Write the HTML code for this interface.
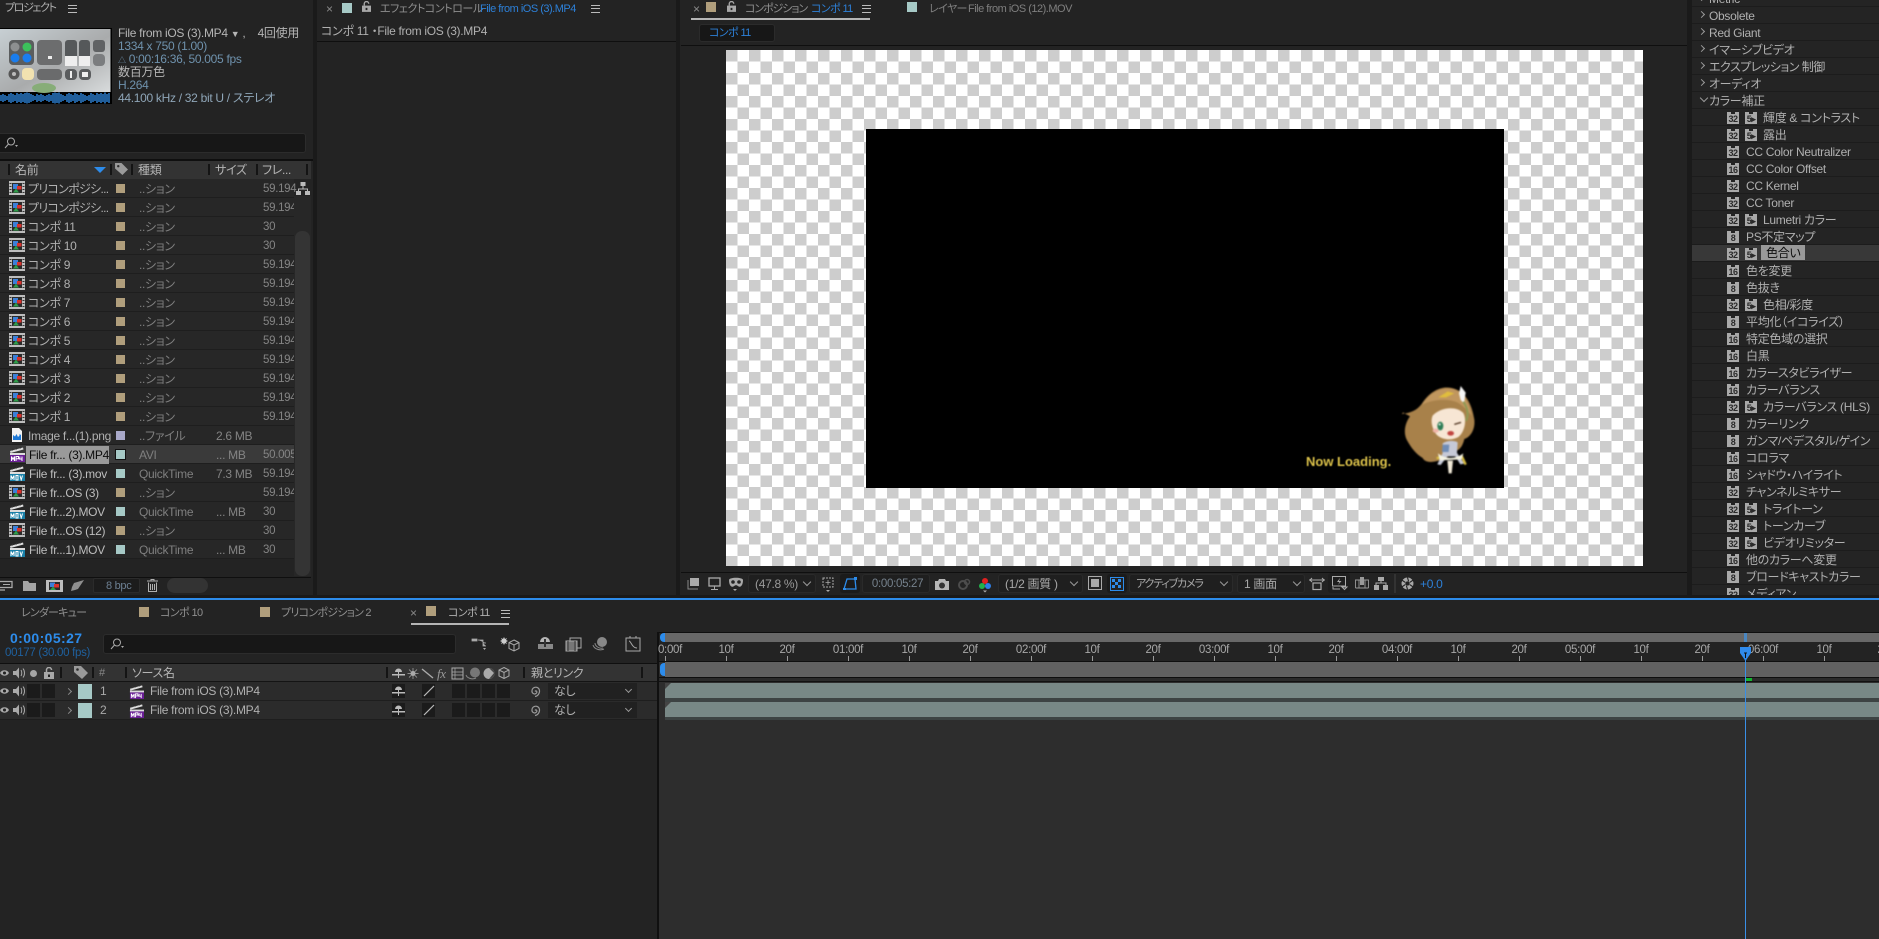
<!DOCTYPE html>
<html lang="ja"><head><meta charset="utf-8"><title>After Effects</title>
<style>
*{box-sizing:border-box}
html,body{margin:0;padding:0;width:1879px;height:939px;overflow:hidden;background:#1a1a1a;font-family:"Liberation Sans","Noto Sans CJK JP","IPAGothic",sans-serif;font-size:12px;letter-spacing:-.3px;font-feature-settings:"palt";color:#b0b0b0}
.a{position:absolute;white-space:nowrap}
.p{position:absolute;background:#232323;overflow:hidden}
.sw{position:absolute;display:block}
.sep{position:absolute;width:2px;background:#141414}
.menu{position:absolute;width:9px;height:8px;border-top:1px solid #bbb;border-bottom:1px solid #bbb}
.menu:after{content:"";position:absolute;left:0;right:0;top:2px;height:1px;background:#bbb}
.blue{color:#2d8ceb}
.x{color:#8a8a8a;font-size:12px}
.tab{font-size:11px;letter-spacing:-.6px}
svg{display:block;position:absolute;overflow:visible}
#rows{position:absolute;left:0;top:179px;width:294px}
.r{position:relative;height:19px;background:#272727;border-bottom:1px solid #1e1e1e;line-height:20px;white-space:nowrap}
.r svg{left:9px;top:2px;width:16px;height:14px}
.r .n{position:absolute;left:28px;top:0;color:#b0b0b0;height:18px;line-height:20px}
.r .s{position:absolute;left:116px;top:5px;width:9px;height:9px}
.r .t{position:absolute;left:139px;color:#7f7f7f}
.r .z{position:absolute;left:216px;color:#848484}
.r .f{position:absolute;left:263px;color:#848484;font-size:11.5px}
.tan{background:#b09e7c}.teal{background:#a6c9c6}.lav{background:#a9a9c9}
#fx{position:absolute;left:1692px;top:0;width:187px;height:595px;background:#242424;overflow:hidden}
.e{position:relative;height:17px;line-height:18px;border-bottom:1px solid #1c1c1c;white-space:nowrap;color:#b0b0b0}
.e .c{position:absolute;left:17px}
.e .ar{position:absolute;left:7px;top:5px;width:5px;height:5px;border-top:1px solid #999;border-right:1px solid #999;transform:rotate(45deg)}
.e .dn{position:absolute;left:9px;top:3px;width:6px;height:6px;border-bottom:1px solid #999;border-right:1px solid #999;transform:rotate(45deg)}
.e .l1{position:absolute;left:54px}
.e .l2{position:absolute;left:71px}
.b{position:absolute;left:35px;top:3px;width:12px;height:12px;background:#a9a9a9;color:#2a2a2a;font:bold 9px/14px "Liberation Sans",sans-serif;text-align:center;letter-spacing:-.5px}
.b:before{content:"";position:absolute;left:4px;top:0;width:4px;height:2px;background:#242424}
.b.q{left:53px}
.ck{position:absolute;left:726px;top:50px;width:917px;height:516px;background-color:#fff;background-image:conic-gradient(#cdcdcd 25%,#fff 0 50%,#cdcdcd 0 75%,#fff 0);background-size:23px 23px;background-position:11.5px 0}
.tk{position:absolute;top:656px;width:1px;height:5px;background:#9a9a9a}
.lb{position:absolute;top:644px;line-height:13px;color:#a8a8a8;font-size:11.5px;transform:translateX(-50%);white-space:nowrap}
.sb{position:absolute;background:#1b1b1b;width:13px;height:14px}
.tb{position:absolute;top:574px;height:19px;border:1px solid #2a2a2a;background:#1f1f1f;border-radius:3px;color:#9a9a9a;line-height:19px;padding-left:6px;white-space:nowrap}
.ch{position:absolute;width:6px;height:6px;border-right:1px solid #999;border-bottom:1px solid #999;transform:rotate(45deg)}
</style></head><body>
<svg width="0" height="0" style="position:absolute">
<defs>
<symbol id="comp" viewBox="0 0 16 14"><rect x="0" y="0" width="16" height="14" fill="#bdbdbd"/><path d="M.5 2.500h2M.5 5.500h2M.5 8.500h2M.5 11.500h2M13.500 2.500h2M13.500 5.500h2M13.500 8.500h2M13.500 11.500h2" stroke="#333"/><rect x="3" y="2" width="10" height="10" fill="#2b2b2b"/><rect x="4" y="3" width="5" height="5" fill="#3c7fd8"/><rect x="8" y="5" width="4.500" height="3.500" fill="#d8322c"/><path d="M4 11.500l3-4 3 4z" fill="#2f9e4a"/></symbol>
<symbol id="mp4" viewBox="0 0 16 16"><path d="M1 5l13-3.500.5 2L1.500 7z" fill="#ddd"/><path d="M3 4.500l1-2M7 3.500l1-2M11 2.500l1-2" stroke="#333"/><rect x="1" y="7" width="15" height="2" fill="#ddd"/><rect x="1" y="9" width="15" height="7" fill="#6a1f96"/><path d="M2.500 15v-4.500l1.500 3 1.500-3V15M7 15v-4.500h2.500v2.200H7M11 10.500l-.5 2.500h3M13 10.500V15" fill="none" stroke="#fff" stroke-width="1"/></symbol>
<symbol id="mov" viewBox="0 0 16 16"><path d="M1 5l13-3.500.5 2L1.500 7z" fill="#ddd"/><path d="M3 4.500l1-2M7 3.500l1-2M11 2.500l1-2" stroke="#333"/><rect x="1" y="7" width="15" height="2" fill="#ddd"/><rect x="1" y="9" width="15" height="7" fill="#1a80a8"/><path d="M2 15v-4.500l1.500 3 1.500-3V15M7 10.500h2v4.500H7zM11 10.500l1.200 4.500 1.300-4.500" fill="none" stroke="#fff" stroke-width="1"/></symbol>
<symbol id="png" viewBox="0 0 16 14"><path d="M3 0h7l3 3v11H3z" fill="#f2f2f2"/><path d="M4 12V7l2 1.500 1.500-2.500 1.500 3 1.500-1.500V6l1.500 1v5z" fill="#1d78d6"/></symbol>
<symbol id="eye" viewBox="0 0 10 8"><path d="M0 4c2-4 8-4 10 0-2 4-8 4-10 0z" fill="#aaa"/><circle cx="5" cy="4" r="1.700" fill="#222"/></symbol>
<symbol id="spk" viewBox="0 0 12 12"><path d="M0 4h3l3-3.500v11L3 8H0z" fill="#aaa"/><path d="M8 3c1 1.500 1 4.500 0 6M10 1.500c2 2.500 2 6.500 0 9" stroke="#aaa" fill="none"/></symbol>
<symbol id="shy" viewBox="0 0 13 10"><path d="M3 4a3.500 3.500 0 0 1 7 0z" fill="#bbb"/><path d="M0 6h13v1.500H0z" fill="#bbb"/><path d="M6.500 4v6" stroke="#bbb"/></symbol>
<symbol id="spiral" viewBox="0 0 12 12"><path d="M6 6.500c1-1.500 2.500 0 1.500 1.500-1.500 2-5 .5-4.500-2.500C3.500 2 8 1 10 4c1.500 3-.5 7-4 7.500" fill="none" stroke="#9a9a9a" stroke-width="1.200"/></symbol>
<symbol id="tag" viewBox="0 0 14 13"><path d="M0 0h7l7 7-6 6-8-7z" fill="#9a9a9a"/><circle cx="3.500" cy="3.500" r="1.300" fill="#2e2e2e"/></symbol>
<symbol id="netw" viewBox="0 0 14 13"><rect x="4.500" y="0" width="5" height="4" fill="#bbb"/><path d="M7 4v3M2.500 9V7h9v2" stroke="#bbb" fill="none"/><rect x="0" y="9" width="5" height="4" fill="#bbb"/><rect x="9" y="9" width="5" height="4" fill="#bbb"/></symbol>
<symbol id="lock" viewBox="0 0 10 12"><rect x="0" y="5" width="10" height="7" fill="#a8a8a8"/><path d="M2.500 5V3a2.500 2.500 0 0 1 5 0" fill="none" stroke="#a8a8a8" stroke-width="1.500"/><rect x="4" y="7.500" width="2" height="2.500" fill="#222"/></symbol>
<symbol id="cube" viewBox="0 0 12 12"><path d="M6 .5l5 2.500v6L6 11.500 1 9V3zM1 3l5 2.500L11 3M6 5.500v6" fill="none" stroke="#aaa"/></symbol>
</defs></svg>

<!-- PROJECT PANEL -->
<div class="p" style="left:0;top:0;width:313px;height:595px">
 <div class="a" style="left:5px;top:1px;color:#b0b0b0;line-height:15px;font-size:11px;letter-spacing:-1.4px">プロジェクト</div>
 <div class="menu" style="left:68px;top:5px"></div>

 <svg style="left:0;top:28px" width="112" height="76" viewBox="0 0 112 76">
  <defs><linearGradient id="tg" x1="0" y1="0" x2="1" y2="1"><stop offset="0" stop-color="#c7cfd3"/><stop offset=".55" stop-color="#a9abac"/><stop offset="1" stop-color="#d8dbdc"/></linearGradient></defs>
  <rect width="112" height="76" fill="#000"/>
  <rect x="0" y="1" width="110.500" height="63" fill="url(#tg)"/>
  <ellipse cx="44" cy="60" rx="12" ry="5" fill="#87ad78"/>
  <rect x="9" y="12" width="25" height="25" rx="4" fill="#5b5d5e"/>
  <circle cx="15" cy="19" r="4.500" fill="#8d8f90"/><circle cx="27" cy="19" r="4.500" fill="#3cc15b"/><circle cx="15" cy="30" r="4.500" fill="#1a7dee"/><circle cx="27" cy="30" r="4.500" fill="#1a7dee"/>
  <rect x="37" y="12" width="25" height="25" rx="4" fill="#6c6d6e"/><rect x="48" y="28" width="4" height="3" fill="#eee"/>
  <rect x="65" y="12" width="12" height="26" rx="3" fill="#55585a"/><rect x="65" y="28" width="12" height="10" fill="#eee"/>
  <rect x="79" y="12" width="11" height="26" rx="3" fill="#55585a"/><rect x="79" y="28" width="11" height="10" fill="#eee"/>
  <rect x="93" y="12" width="12" height="12" rx="3" fill="#606264"/><rect x="93" y="26" width="12" height="12" rx="4" fill="#7b7d7f"/>
  <circle cx="14" cy="46" r="5.500" fill="#555"/><circle cx="14" cy="46" r="2" fill="#bbb"/>
  <rect x="22" y="40" width="12" height="12" rx="4" fill="#f1e2b0"/>
  <rect x="37" y="41" width="25" height="11" rx="4" fill="#6a6b6c"/>
  <rect x="65" y="41" width="12" height="11" rx="4" fill="#5a5c5e"/><rect x="70" y="43" width="2" height="7" fill="#eee"/>
  <rect x="79" y="41" width="12" height="11" rx="4" fill="#5a5c5e"/><rect x="82" y="44" width="6" height="5" fill="#eee"/>
  <path d="M1 67v6M3 66v8M5 67v6M7 68v4M9 66v8M11 65v10M13 66v8M15 67v6M17 65v10M19 66v8M21 65v10M23 66v8M25 65v10M27 64.500v11M29 65v10M31 66v8M33 67v6M35 68v4M37 66v8M39 67v6M41 66v8M43 67v6M45 68v4M47 67v6M49 66v8M51 67v6M53 65v10M55 64.500v11M57 65v10M59 64.500v11M61 66v8M63 67v6M65 68v4M67 66v8M69 65v10M71 66v8M73 67v6M75 65v10M77 66v8M79 67v6M81 65v10M83 66v8M85 67v6M87 68v4M89 67v6M91 65v10M93 66v8M95 67v6M97 65v10M99 66v8M101 65v10M103 66v8M105 64.500v11M107 66v8M109 65v10" stroke="#2f87dd" stroke-width="1.400"/>
 </svg>

 <div class="a" style="left:118px;top:26px;line-height:14px;color:#b5b5b5">File from iOS (3).MP4 <span style="font-size:9px">▼</span> ,&nbsp;&nbsp;&nbsp; 4回使用</div>
 <div class="a" style="left:118px;top:39px;line-height:14px;color:#6f92ad">1334 x 750 (1.00)</div>
 <div class="a" style="left:118px;top:52px;line-height:14px;color:#6f92ad"><span style="font-size:8px">△</span> 0:00:16:36, 50.005 fps</div>
 <div class="a" style="left:118px;top:65px;line-height:14px;color:#b5b5b5">数百万色</div>
 <div class="a" style="left:118px;top:78px;line-height:14px;color:#6f92ad">H.264</div>
 <div class="a" style="left:118px;top:91px;line-height:14px;color:#8fa6b8">44.100 kHz / 32 bit U / ステレオ</div>

 <div class="a" style="left:-4px;top:133px;width:310px;height:20px;background:#171717;border:1px solid #2c2c2c;border-radius:3px"></div>
 <svg style="left:5px;top:137px" width="13" height="12" viewBox="0 0 13 12"><circle cx="6" cy="4.500" r="3.500" fill="none" stroke="#aaa"/><path d="M3.500 7L0 11" stroke="#aaa"/><path d="M10 8h3l-1.500 2z" fill="#aaa"/></svg>

 <div class="a" style="left:0;top:159px;width:313px;height:2px;background:#0f0f0f"></div>
 <div class="a" style="left:0;top:161px;width:311px;height:18px;background:#333"></div>
 <div class="sep" style="left:8px;top:164px;height:11px"></div><div class="sep" style="left:110px;top:164px;height:11px"></div><div class="sep" style="left:131px;top:164px;height:11px"></div><div class="sep" style="left:208px;top:164px;height:11px"></div><div class="sep" style="left:256px;top:164px;height:11px"></div><div class="sep" style="left:306px;top:164px;height:11px"></div>
 <div class="a" style="left:15px;top:162px;line-height:16px;color:#b5b5b5">名前</div>
 <svg style="left:94px;top:167px" width="12" height="6"><path d="M0 0h12L6 6z" fill="#2d8ceb"/></svg>
 <svg style="left:115px;top:163px;width:13px;height:12px"><use href="#tag"/></svg>
 <div class="a" style="left:138px;top:162px;line-height:16px;color:#b5b5b5">種類</div>
 <div class="a" style="left:215px;top:162px;line-height:16px;color:#b5b5b5">サイズ</div>
 <div class="a" style="left:262px;top:162px;line-height:16px;color:#b5b5b5">フレ...</div>

 <div id="rows">
  <div class="r"><svg><use href="#comp"/></svg><span class="n" style="letter-spacing:-.7px">プリコンポジシ...</span><i class="s tan"></i><span class="t">..ション</span><span class="f">59.194</span></div>
  <div class="r"><svg><use href="#comp"/></svg><span class="n" style="letter-spacing:-.7px">プリコンポジシ...</span><i class="s tan"></i><span class="t">..ション</span><span class="f">59.194</span></div>
  <div class="r"><svg><use href="#comp"/></svg><span class="n">コンポ 11</span><i class="s tan"></i><span class="t">..ション</span><span class="f">30</span></div>
  <div class="r"><svg><use href="#comp"/></svg><span class="n">コンポ 10</span><i class="s tan"></i><span class="t">..ション</span><span class="f">30</span></div>
  <div class="r"><svg><use href="#comp"/></svg><span class="n">コンポ 9</span><i class="s tan"></i><span class="t">..ション</span><span class="f">59.194</span></div>
  <div class="r"><svg><use href="#comp"/></svg><span class="n">コンポ 8</span><i class="s tan"></i><span class="t">..ション</span><span class="f">59.194</span></div>
  <div class="r"><svg><use href="#comp"/></svg><span class="n">コンポ 7</span><i class="s tan"></i><span class="t">..ション</span><span class="f">59.194</span></div>
  <div class="r"><svg><use href="#comp"/></svg><span class="n">コンポ 6</span><i class="s tan"></i><span class="t">..ション</span><span class="f">59.194</span></div>
  <div class="r"><svg><use href="#comp"/></svg><span class="n">コンポ 5</span><i class="s tan"></i><span class="t">..ション</span><span class="f">59.194</span></div>
  <div class="r"><svg><use href="#comp"/></svg><span class="n">コンポ 4</span><i class="s tan"></i><span class="t">..ション</span><span class="f">59.194</span></div>
  <div class="r"><svg><use href="#comp"/></svg><span class="n">コンポ 3</span><i class="s tan"></i><span class="t">..ション</span><span class="f">59.194</span></div>
  <div class="r"><svg><use href="#comp"/></svg><span class="n">コンポ 2</span><i class="s tan"></i><span class="t">..ション</span><span class="f">59.194</span></div>
  <div class="r"><svg><use href="#comp"/></svg><span class="n">コンポ 1</span><i class="s tan"></i><span class="t">..ション</span><span class="f">59.194</span></div>
  <div class="r"><svg><use href="#png"/></svg><span class="n">Image f...(1).png</span><i class="s lav"></i><span class="t">..ファイル</span><span class="z">2.6 MB</span></div>
  <div class="r" style="background:#3a3a3a"><svg style="height:16px;top:1px"><use href="#mp4"/></svg><span class="n" style="background:#9a9a9a;color:#0c0c0c;left:26px;width:83px;top:1px;line-height:18px;padding-left:3px;overflow:hidden">File fr... (3).MP4</span><i class="s teal" style="outline:1px solid #111"></i><span class="t">AVI</span><span class="z">... MB</span><span class="f">50.005</span></div>
  <div class="r"><svg style="height:16px;top:1px"><use href="#mov"/></svg><span class="n" style="left:29px;color:#bdbdbd">File fr... (3).mov</span><i class="s teal"></i><span class="t">QuickTime</span><span class="z">7.3 MB</span><span class="f">59.194</span></div>
  <div class="r"><svg><use href="#comp"/></svg><span class="n" style="left:29px;color:#bdbdbd">File fr...OS (3)</span><i class="s tan"></i><span class="t">..ション</span><span class="f">59.194</span></div>
  <div class="r"><svg style="height:16px;top:1px"><use href="#mov"/></svg><span class="n" style="left:29px;color:#bdbdbd">File fr...2).MOV</span><i class="s teal"></i><span class="t">QuickTime</span><span class="z">... MB</span><span class="f">30</span></div>
  <div class="r"><svg><use href="#comp"/></svg><span class="n" style="left:29px;color:#bdbdbd">File fr...OS (12)</span><i class="s tan"></i><span class="t">..ション</span><span class="f">30</span></div>
  <div class="r"><svg style="height:16px;top:1px"><use href="#mov"/></svg><span class="n" style="left:29px;color:#bdbdbd">File fr...1).MOV</span><i class="s teal"></i><span class="t">QuickTime</span><span class="z">... MB</span><span class="f">30</span></div>
 </div>
 <svg style="left:296px;top:182px;width:14px;height:13px"><use href="#netw"/></svg>
 <div class="a" style="left:294px;top:196px;width:17px;height:380px;background:#272727"></div>
 <div class="a" style="left:295px;top:231px;width:15px;height:345px;background:#343434;border-radius:7px"></div>
 <div class="a" style="left:0;top:577px;width:311px;height:1px;background:#0f0f0f"></div>

 <svg style="left:0;top:580px" width="84" height="12" viewBox="0 0 84 12"><path d="M0 1.500h12v6H0M0 10h5" fill="none" stroke="#aaa" stroke-width="1.300"/><path d="M3 4.500h7" stroke="#aaa"/><path d="M23 1h5l1.500 2H36v8H23z" fill="#a5a5a5"/><rect x="46" y="0" width="17" height="12" fill="#bdbdbd"/><rect x="49" y="2" width="11" height="8" fill="#2a2a2a"/><rect x="50" y="2.500" width="5" height="4.500" fill="#3c7fd8"/><rect x="54" y="4" width="5" height="3.500" fill="#d8322c"/><path d="M50 10l3-3.500 3 3.500z" fill="#2f9e4a"/><path d="M84 0L74 3l-2 4-1 4 4-1 3-1z" fill="#8f8f8f"/></svg>
 <div class="a" style="left:93px;top:578px;width:47px;height:15px;background:#1c1c1c;border:1px solid #2b2b2b;border-radius:2px;color:#6c7f92;line-height:14px;padding-left:12px;font-size:11px">8 bpc</div>
 <svg style="left:147px;top:579px" width="11" height="13" viewBox="0 0 11 13"><path d="M0 2h11M4 2V.5h3V2M1.500 3.500v9h8v-9M3.500 5v6M5.500 5v6M7.500 5v6" fill="none" stroke="#b0b0b0"/></svg>
 <div class="a" style="left:167px;top:578px;width:41px;height:15px;background:#333;border-radius:8px"></div>
</div>

<!-- EFFECT CONTROLS PANEL -->
<div class="p" style="left:317px;top:0;width:359px;height:595px">
 <div class="a x" style="left:9px;top:2px;line-height:14px">×</div>
 <i class="sw teal" style="left:25px;top:3px;width:10px;height:10px"></i>
 <svg style="left:45px;top:1px;width:9px;height:11px"><use href="#lock"/></svg>
 <div class="a tab" style="left:63px;top:2px;line-height:14px;color:#8f8f8f;letter-spacing:-.45px">エフェクトコントロール</div>
 <div class="a" style="left:163px;top:2px;line-height:14px;color:#2d80d8;font-size:11px;letter-spacing:-.5px">File from iOS (3).MP4</div>
 <div class="menu" style="left:274px;top:5px"></div>
 <div class="a" style="left:4px;top:24px;line-height:15px;color:#b0b0b0">コンポ 11 ・File from iOS (3).MP4</div>
 <div class="a" style="left:0;top:41px;width:359px;height:1px;background:#0f0f0f"></div>
</div>

<!-- COMPOSITION PANEL -->
<div class="p" style="left:680px;top:0;width:1007px;height:595px">
 <div class="a x" style="left:13px;top:2px;line-height:14px">×</div>
 <i class="sw tan" style="left:26px;top:2px;width:10px;height:10px"></i>
 <svg style="left:47px;top:1px;width:9px;height:11px"><use href="#lock"/></svg>
 <div class="a tab" style="left:65px;top:2px;line-height:14px;color:#8f8f8f;letter-spacing:-1.1px">コンポジション</div>
 <div class="a tab" style="left:131px;top:2px;line-height:14px;color:#2d80d8">コンポ 11</div>
 <div class="menu" style="left:182px;top:5px"></div>
 <div class="a" style="left:11px;top:18px;width:179px;height:2px;background:#b5b5b5"></div>
 <i class="sw teal" style="left:227px;top:2px;width:10px;height:10px"></i>
 <div class="a tab" style="left:249px;top:2px;line-height:14px;color:#7f7f7f">レイヤー</div>
 <div class="a" style="left:288px;top:2px;line-height:14px;color:#7f7f7f;font-size:11px;letter-spacing:-.5px">File from iOS (12).MOV</div>
 <div class="a tab" style="left:19px;top:24px;width:76px;height:18px;background:#171717;border:1px solid #2b2b2b;border-radius:3px;color:#2d80d8;line-height:16px;padding-left:9px">コンポ 11</div>
 <div class="a" style="left:1px;top:45px;width:1006px;height:1px;background:#0f0f0f"></div>
 <div class="a" style="left:1px;top:572px;width:1006px;height:1px;background:#0f0f0f"></div>
</div>
<div class="ck"></div>
<div style="position:absolute;left:866px;top:129px;width:638px;height:359px;background:#000"></div>
<div class="a" style="left:1306px;top:454px;font:bold 13px/16px 'Liberation Sans',sans-serif;letter-spacing:0;color:#dcc24a;filter:blur(.4px)">Now Loading.</div>
<svg style="left:1290px;top:370px;filter:blur(.7px)" width="240" height="120" viewBox="0 0 720 360">
 <path d="M335 132c25-3 45-10 60-30 25-40 60-55 90-48 40 8 60 45 68 95 3 30-12 52-30 58-5 22-15 35-30 37-15 18-45 30-70 32-15 0-22-6-25-12-18-10-35-30-48-55-12-25-2-55 10-70-8-5-15-7-20-12z" fill="#a8814a"/>
 <path d="M395 105c25-40 60-52 90-48 30 5 50 30 60 80-10-12-25-30-43-40-35-15-85-5-107 8z" fill="#c0965e"/>
 <path d="M445 82l28-18 20 6-25 12z" fill="#e0bd3d"/>
 <path d="M428 137c20-23 68-32 92-8 10 18 6 55-15 72-20 12-52 9-67-9-12-17-17-40-10-55z" fill="#f7e6d4"/>
 <ellipse cx="451" cy="168" rx="9" ry="13" fill="#2e7d55"/><circle cx="449" cy="163" r="3" fill="#fff"/>
 <path d="M493 163l20-6" stroke="#4a2e1a" stroke-width="4"/>
 <ellipse cx="482" cy="190" rx="10" ry="7" fill="#c0443f"/>
 <ellipse cx="437" cy="182" rx="9" ry="6" fill="#f0b4a8"/>
 <path d="M512 48l15 20-5 32-10-10-5-20z" fill="#f6f6f6"/>
 <path d="M520 95c14 20 16 40 8 58" fill="none" stroke="#8d9a55" stroke-width="6"/>
 <path d="M458 220c12-8 32-10 45-3l-2 32 22 32-12 2-15-24-24 0-20 26-10-2 16-34z" fill="#c6c9d6"/>
 <path d="M458 224h20l-2 22h-20z" fill="#6f8cb5"/>
 <path d="M440 265l15-5M515 258l12 26" stroke="#d8bd3d" stroke-width="7"/>
 <path d="M444 250c22 18 52 18 76 0l-5 18-66 3z" fill="#f5f3e2"/>
 <path d="M472 272l4 38h9l4-38z" fill="#f1e9d7"/>
</svg>

<!-- comp toolbar -->
<svg style="left:687px;top:577px" width="60" height="14" viewBox="0 0 60 14"><path d="M3 1h9v8H3z" fill="#aaa"/><path d="M1 3v9h10" fill="none" stroke="#888" stroke-width="1"/><rect x="22" y="1" width="11" height="8" fill="none" stroke="#aaa" stroke-width="1.300"/><path d="M27.500 9v3M24 12.500h7" stroke="#aaa"/><path d="M42 3c0-3 14-3 14 0 0 6-3 8-5 6l-2-1-2 1c-2 2-5 0-5-6z" fill="#a8a8a8"/><circle cx="46" cy="5" r="1.800" fill="#222"/><circle cx="52" cy="5" r="1.800" fill="#222"/><path d="M46 12h4l-2 2z" fill="#aaa"/></svg>
<div class="tb" style="left:748px;width:68px">(47.8 %)</div><div class="ch" style="left:804px;top:579px"></div>
<svg style="left:821px;top:576px" width="14" height="17" viewBox="0 0 14 17"><rect x="2" y="2" width="10" height="9" fill="none" stroke="#aaa" stroke-dasharray="2 1"/><path d="M7 4v5M4.500 6.500h5" stroke="#aaa" stroke-width=".8"/><path d="M5 14h4l-2 2z" fill="#aaa"/></svg>
<div class="a" style="left:840px;top:574px;width:20px;height:19px;background:#1b1b1b;border-radius:3px"></div>
<svg style="left:843px;top:577px" width="14" height="13" viewBox="0 0 14 13"><path d="M1 12L4 2h8l1 10z" fill="none" stroke="#2d8ceb" stroke-width="1.300"/><rect x="0" y="11" width="3" height="2" fill="#2d8ceb"/><rect x="11" y="0" width="3" height="3" fill="#2d8ceb"/></svg>
<div class="tb" style="left:862px;width:68px;color:#75818c;font-size:11.5px">&nbsp;0:00:05:27</div>
<svg style="left:935px;top:578px" width="58" height="15" viewBox="0 0 58 15"><path d="M0 3h3l1-2h6l1 2h3v9H0z" fill="#b5b5b5"/><circle cx="7" cy="7.500" r="3" fill="#333"/><circle cx="28" cy="7" r="4" fill="none" stroke="#4c4c4c" stroke-width="2"/><circle cx="32" cy="4" r="2.500" fill="none" stroke="#4c4c4c" stroke-width="1.500"/><circle cx="50" cy="3" r="3" fill="#e02020"/><circle cx="47" cy="8" r="3" fill="#22b14c"/><circle cx="53" cy="8" r="3" fill="#2f7ee6"/><path d="M48 12.500h4l-2 2z" fill="#aaa"/></svg>
<div class="tb" style="left:998px;width:85px;padding-left:6px;color:#a8a8a8">(1/2 画質 )</div><div class="ch" style="left:1071px;top:579px"></div>
<svg style="left:1088px;top:576px" width="14" height="14" viewBox="0 0 14 14"><rect x=".5" y=".5" width="13" height="13" fill="none" stroke="#aaa"/><rect x="3" y="3" width="8" height="8" fill="#aaa"/></svg>
<div class="a" style="left:1107px;top:574px;width:20px;height:19px;background:#1b1b1b;border-radius:3px"></div>
<svg style="left:1110px;top:577px" width="14" height="14" viewBox="0 0 14 14"><rect x=".5" y=".5" width="13" height="13" fill="#222" stroke="#2d8ceb"/><path d="M2 2h3v3H2zM8 2h3v3H8zM5 5h3v3H5zM2 8h3v3H2zM8 8h3v3H8z" fill="#2d8ceb"/></svg>
<div class="tb" style="left:1129px;width:104px;color:#a8a8a8;font-size:11px;letter-spacing:-1.2px">アクティブカメラ</div><div class="ch" style="left:1221px;top:579px"></div>
<div class="tb" style="left:1237px;width:68px;color:#a8a8a8">1 画面</div><div class="ch" style="left:1294px;top:579px"></div>
<svg style="left:1309px;top:577px" width="16" height="13" viewBox="0 0 16 13"><path d="M0 3h16M1 3l2-2M1 3l2 2M15 3l-2-2M15 3l-2 2" stroke="#aaa" fill="none"/><rect x="4" y="6" width="8" height="6.500" fill="none" stroke="#aaa" stroke-width="1.200"/></svg>
<div class="a" style="left:1328px;top:573px;width:22px;height:20px;background:#1e1e1e;border-radius:3px"></div>
<svg style="left:1332px;top:576px" width="15" height="14" viewBox="0 0 15 14"><rect x=".5" y=".5" width="13" height="9.500" fill="none" stroke="#aaa"/><path d="M8 2L5 6h2.500L6 9l3.500-4H7z" fill="#aaa"/><path d="M1 11v2h7M10 11h5l-2.500 2.500z" fill="none" stroke="#aaa"/></svg>
<svg style="left:1355px;top:577px" width="36" height="13" viewBox="0 0 36 13"><path d="M.5 11V3h13v8M4 3v8M10 3v8M.5 11h13" fill="none" stroke="#999" stroke-width=".9"/><rect x="5" y="0" width="4" height="8" fill="#999"/><rect x="23" y="0" width="6" height="4" fill="#aaa"/><path d="M26 4v2M21 8V6h10v2" stroke="#aaa" fill="none"/><rect x="19" y="8" width="5" height="5" fill="#aaa"/><rect x="28" y="8" width="5" height="5" fill="#aaa"/></svg>
<div class="a" style="left:1394px;top:574px;width:2px;height:19px;background:#333"></div>
<svg style="left:1401px;top:577px" width="13" height="13" viewBox="0 0 12 12"><circle cx="6" cy="6" r="5.500" fill="#a8a8a8"/><circle cx="6" cy="6" r="2" fill="#222"/><path d="M6 .5L7 4M11 3L8 5M11 9L8 7M6 11.500L5 8M1 9l3-2M1 3l3 2" stroke="#222"/></svg>
<div class="a" style="left:1420px;top:577px;line-height:14px;color:#2d80d8">+0.0</div>

<!-- EFFECTS LIST -->
<div id="fx"><div style="position:absolute;left:0;top:-10px;width:187px">
<div class="e"><i class="ar"></i><span class="c">Metric</span></div>
<div class="e"><i class="ar"></i><span class="c">Obsolete</span></div>
<div class="e"><i class="ar"></i><span class="c">Red Giant</span></div>
<div class="e"><i class="ar"></i><span class="c">イマーシブビデオ</span></div>
<div class="e"><i class="ar"></i><span class="c" style="letter-spacing:-.5px">エクスプレッション 制御</span></div>
<div class="e"><i class="ar"></i><span class="c">オーディオ</span></div>
<div class="e"><i class="dn"></i><span class="c">カラー補正</span></div>
<div class="e"><b class="b">32</b><b class="b q">5▸</b><span class="l2">輝度 &amp; コントラスト</span></div>
<div class="e"><b class="b">32</b><b class="b q">5▸</b><span class="l2">露出</span></div>
<div class="e"><b class="b">32</b><span class="l1">CC Color Neutralizer</span></div>
<div class="e"><b class="b">16</b><span class="l1">CC Color Offset</span></div>
<div class="e"><b class="b">32</b><span class="l1">CC Kernel</span></div>
<div class="e"><b class="b">32</b><span class="l1">CC Toner</span></div>
<div class="e"><b class="b">32</b><b class="b q">5▸</b><span class="l2">Lumetri カラー</span></div>
<div class="e"><b class="b">8</b><span class="l1">PS不定マップ</span></div>
<div class="e" style="background:#383838"><b class="b">32</b><b class="b q">5▸</b><span class="l2" style="left:69px;background:#999;color:#0c0c0c;padding:0 5px;height:15px;line-height:16px;top:0">色合い</span></div>
<div class="e"><b class="b">16</b><span class="l1">色を変更</span></div>
<div class="e"><b class="b">8</b><span class="l1">色抜き</span></div>
<div class="e"><b class="b">32</b><b class="b q">5▸</b><span class="l2">色相/彩度</span></div>
<div class="e"><b class="b">8</b><span class="l1">平均化（イコライズ）</span></div>
<div class="e"><b class="b">16</b><span class="l1">特定色域の選択</span></div>
<div class="e"><b class="b">16</b><span class="l1">白黒</span></div>
<div class="e"><b class="b">16</b><span class="l1">カラースタビライザー</span></div>
<div class="e"><b class="b">16</b><span class="l1">カラーバランス</span></div>
<div class="e"><b class="b">32</b><b class="b q">5▸</b><span class="l2">カラーバランス (HLS)</span></div>
<div class="e"><b class="b">8</b><span class="l1">カラーリンク</span></div>
<div class="e"><b class="b">8</b><span class="l1">ガンマ/ペデスタル/ゲイン</span></div>
<div class="e"><b class="b">16</b><span class="l1">コロラマ</span></div>
<div class="e"><b class="b">16</b><span class="l1">シャドウ・ハイライト</span></div>
<div class="e"><b class="b">32</b><span class="l1">チャンネルミキサー</span></div>
<div class="e"><b class="b">32</b><b class="b q">5▸</b><span class="l2">トライトーン</span></div>
<div class="e"><b class="b">32</b><b class="b q">5▸</b><span class="l2">トーンカーブ</span></div>
<div class="e"><b class="b">32</b><b class="b q">5▸</b><span class="l2">ビデオリミッター</span></div>
<div class="e"><b class="b">16</b><span class="l1">他のカラーへ変更</span></div>
<div class="e"><b class="b">8</b><span class="l1">ブロードキャストカラー</span></div>
<div class="e"><b class="b">32</b><span class="l1">メディアン</span></div>
</div></div>

<!-- TIMELINE -->
<div class="a" style="left:0;top:598px;width:1879px;height:2px;background:#2d8ceb"></div>
<div class="p" style="left:0;top:600px;width:1879px;height:339px">
 <div class="a tab" style="left:21px;top:6px;line-height:14px;color:#8f8f8f;letter-spacing:-.8px">レンダーキュー</div>
 <i class="sw tan" style="left:139px;top:7px;width:10px;height:10px"></i>
 <div class="a tab" style="left:160px;top:6px;line-height:14px;color:#8f8f8f">コンポ 10</div>
 <i class="sw tan" style="left:260px;top:7px;width:10px;height:10px"></i>
 <div class="a tab" style="left:281px;top:6px;line-height:14px;color:#8f8f8f;letter-spacing:-.75px">プリコンポジション 2</div>
 <div class="a x" style="left:410px;top:6px;line-height:14px">×</div>
 <i class="sw tan" style="left:426px;top:6px;width:10px;height:10px"></i>
 <div class="a tab" style="left:448px;top:6px;line-height:14px;color:#b0b0b0">コンポ 11</div>
 <div class="menu" style="left:501px;top:10px"></div>
 <div class="a" style="left:411px;top:23px;width:98px;height:2px;background:#b5b5b5"></div>

 <div class="a" style="left:10px;top:30px;font:bold 14px/16px 'Liberation Sans',sans-serif;color:#2d8ceb;letter-spacing:.4px">0:00:05:27</div>
 <div class="a" style="left:5px;top:46px;line-height:14px;color:#1f619f;font-size:11.5px">00177 (30.00 fps)</div>
 <div class="a" style="left:103px;top:34px;width:353px;height:20px;background:#171717;border:1px solid #2c2c2c;border-radius:3px"></div>
 <svg style="left:111px;top:38px" width="13" height="12" viewBox="0 0 13 12"><circle cx="6" cy="4.500" r="3.500" fill="none" stroke="#aaa"/><path d="M3.500 7L0 11" stroke="#aaa"/><path d="M10 8h3l-1.500 2z" fill="#aaa"/></svg>

 <svg style="left:470px;top:36px" width="172" height="17" viewBox="0 0 172 17"><path d="M2 3h5v2H2zM8 4h5v3h3M13 7v3h3" fill="#aaa" stroke="#aaa" stroke-width=".8"/><path d="M13 12h3l-1.500 2z" fill="#aaa"/><path d="M34 1l1 2 2-1-1 2 2 1-2 1 1 2-2-1-1 2-1-2-2 1 1-2-2-1 2-1-1-2 2 1z" fill="#ccc"/><path d="M44 4l5 2.500v6L44 15l-5-2.500v-6zM39 6.500L44 9l5-2.500M44 9v6" fill="none" stroke="#aaa"/><path d="M70 6a5 5 0 0 1 10 0z" fill="#b5b5b5"/><rect x="68" y="8" width="15" height="5" fill="#888"/><rect x="74" y="3" width="2" height="8" fill="#333"/><rect x="100" y="2" width="11" height="10" fill="none" stroke="#aaa"/><rect x="96" y="5" width="11" height="10" fill="#777" stroke="#aaa"/><path d="M98 5v10M105 5v10" stroke="#333"/><circle cx="132" cy="6" r="5" fill="#888"/><path d="M123 9c1 4 7 6 11 4M125 7c0 3 4 6 8 5" fill="none" stroke="#888"/><rect x="156" y="2" width="14" height="13" fill="none" stroke="#aaa"/><path d="M159 5c2 0 3 7 8 7M160 2V0M166 2V0" fill="none" stroke="#aaa"/></svg>

 <div class="a" style="left:0;top:63px;width:658px;height:1px;background:#0f0f0f"></div>
 <div class="a" style="left:0;top:64px;width:658px;height:17px;background:#333"></div>
 <div class="a" style="left:0;top:81px;width:658px;height:1px;background:#141414"></div>
 <svg style="left:0;top:69px;width:9px;height:8px"><use href="#eye"/></svg>
 <svg style="left:13px;top:67px;width:12px;height:12px"><use href="#spk"/></svg>
 <div class="a" style="left:30px;top:70px;width:7px;height:7px;border-radius:50%;background:#a5a5a5"></div>
 <svg style="left:44px;top:67px;width:10px;height:12px"><use href="#lock"/></svg>
 <div class="sep" style="left:60px;top:67px;height:11px"></div>
 <svg style="left:74px;top:66px;width:14px;height:13px"><use href="#tag"/></svg>
 <div class="sep" style="left:92px;top:67px;height:11px"></div>
 <div class="a" style="left:99px;top:65px;line-height:16px;color:#8a8a8a;font-size:11px">#</div>
 <div class="sep" style="left:125px;top:67px;height:11px"></div>
 <div class="a" style="left:132px;top:65px;line-height:16px;color:#b5b5b5">ソース名</div>
 <div class="sep" style="left:386px;top:67px;height:11px"></div>
 <svg style="left:392px;top:68px;width:13px;height:10px"><use href="#shy"/></svg>
 <svg style="left:407px;top:67px" width="115" height="13" viewBox="0 0 115 13"><circle cx="6" cy="6.500" r="2.500" fill="#aaa"/><path d="M6 1v11M.5 6.500h11M2 2.500l8 8M10 2.500l-8 8" stroke="#aaa" stroke-width=".7"/><path d="M15 2l11 9" stroke="#aaa" stroke-width="1.400"/><text x="30" y="11" fill="#999" font-family="Liberation Serif" font-style="italic" font-size="13">fx</text><rect x="45" y="1" width="11" height="11" fill="#333" stroke="#aaa"/><path d="M48 1v11M45 5h11M45 8h11" stroke="#aaa" stroke-width=".7"/><circle cx="68" cy="5.500" r="5" fill="#777"/><path d="M59 8c1 3 6 5 10 3" fill="none" stroke="#888"/><circle cx="82" cy="6.500" r="5.500" fill="#aaa"/><path d="M82 1a5.500 5.500 0 0 1 0 11l5-6z" fill="#444"/></svg>
 <svg style="left:498px;top:67px;width:12px;height:12px"><use href="#cube"/></svg>
 <div class="sep" style="left:523px;top:67px;height:11px"></div>
 <div class="a" style="left:531px;top:65px;line-height:16px;color:#b5b5b5">親とリンク</div>
 <div class="sep" style="left:641px;top:67px;height:11px"></div>

 <!-- rows -->
 <div class="a" style="left:0;top:82px;width:658px;height:19px;background:#2b2b2b;border-bottom:1px solid #1e1e1e"></div>
 <div class="a" style="left:0;top:101px;width:658px;height:19px;background:#2b2b2b;border-bottom:1px solid #1e1e1e"></div>

 <svg style="left:0;top:87px;width:9px;height:8px"><use href="#eye"/></svg><svg style="left:13px;top:85px;width:12px;height:12px"><use href="#spk"/></svg>
 <div class="sb" style="left:27px;top:84px"></div><div class="sb" style="left:42px;top:84px"></div>
 <div class="a" style="left:66px;top:89px;width:5px;height:5px;border-top:1px solid #888;border-right:1px solid #888;transform:rotate(45deg)"></div>
 <i class="sw teal" style="left:78px;top:84px;width:14px;height:15px"></i>
 <div class="a" style="left:100px;top:84px;line-height:14px;color:#aaa">1</div>
 <svg style="left:129px;top:84px;width:15px;height:15px"><use href="#mp4"/></svg>
 <div class="a" style="left:150px;top:84px;line-height:14px;color:#b0b0b0">File from iOS (3).MP4</div>
 <div class="sb" style="left:392px;top:84px"></div><svg style="left:392px;top:86px;width:13px;height:10px"><use href="#shy"/></svg>
 <div class="sb" style="left:422px;top:84px"></div><svg style="left:424px;top:86px" width="10" height="10"><path d="M0 10L10 0" stroke="#bbb" stroke-width="1.200"/></svg>
 <div class="sb" style="left:452px;top:84px"></div><div class="sb" style="left:467px;top:84px"></div><div class="sb" style="left:482px;top:84px"></div><div class="sb" style="left:497px;top:84px"></div>
 <svg style="left:529px;top:85px;width:12px;height:12px"><use href="#spiral"/></svg>
 <div class="a" style="left:548px;top:83px;width:89px;height:16px;background:#212121;color:#b0b0b0;line-height:16px;padding-left:6px">なし</div><div class="ch" style="left:626px;top:87px;width:5px;height:5px"></div>

 <svg style="left:0;top:106px;width:9px;height:8px"><use href="#eye"/></svg><svg style="left:13px;top:104px;width:12px;height:12px"><use href="#spk"/></svg>
 <div class="sb" style="left:27px;top:103px"></div><div class="sb" style="left:42px;top:103px"></div>
 <div class="a" style="left:66px;top:108px;width:5px;height:5px;border-top:1px solid #888;border-right:1px solid #888;transform:rotate(45deg)"></div>
 <i class="sw teal" style="left:78px;top:103px;width:14px;height:15px"></i>
 <div class="a" style="left:100px;top:103px;line-height:14px;color:#aaa">2</div>
 <svg style="left:129px;top:103px;width:15px;height:15px"><use href="#mp4"/></svg>
 <div class="a" style="left:150px;top:103px;line-height:14px;color:#b0b0b0">File from iOS (3).MP4</div>
 <div class="sb" style="left:392px;top:103px"></div><svg style="left:392px;top:105px;width:13px;height:10px"><use href="#shy"/></svg>
 <div class="sb" style="left:422px;top:103px"></div><svg style="left:424px;top:105px" width="10" height="10"><path d="M0 10L10 0" stroke="#bbb" stroke-width="1.200"/></svg>
 <div class="sb" style="left:452px;top:103px"></div><div class="sb" style="left:467px;top:103px"></div><div class="sb" style="left:482px;top:103px"></div><div class="sb" style="left:497px;top:103px"></div>
 <svg style="left:529px;top:104px;width:12px;height:12px"><use href="#spiral"/></svg>
 <div class="a" style="left:548px;top:102px;width:89px;height:16px;background:#212121;color:#b0b0b0;line-height:16px;padding-left:6px">なし</div><div class="ch" style="left:626px;top:106px;width:5px;height:5px"></div>
</div>

<!-- timeline right -->
<div style="position:absolute;left:657px;top:632px;width:2px;height:307px;background:#101010"></div>
<div style="position:absolute;left:659px;top:720px;width:1220px;height:219px;background:#2d2d2d"></div>
<div style="position:absolute;left:659px;top:632px;width:1220px;height:1px;background:#0f0f0f"></div>
<div style="position:absolute;left:665px;top:633px;width:1214px;height:9px;background:#686868"></div>
<div style="position:absolute;left:660px;top:633px;width:5px;height:9px;background:#2d8ceb;border-radius:4px 0 0 4px"></div>
<div style="position:absolute;left:659px;top:642px;width:1220px;height:19px;background:#232323"></div>
<span class="lb" style="left:670px">0:00f</span><span class="lb" style="left:726px">10f</span><span class="lb" style="left:787px">20f</span><span class="lb" style="left:848px">01:00f</span><span class="lb" style="left:909px">10f</span><span class="lb" style="left:970px">20f</span><span class="lb" style="left:1031px">02:00f</span><span class="lb" style="left:1092px">10f</span><span class="lb" style="left:1153px">20f</span><span class="lb" style="left:1214px">03:00f</span><span class="lb" style="left:1275px">10f</span><span class="lb" style="left:1336px">20f</span><span class="lb" style="left:1397px">04:00f</span><span class="lb" style="left:1458px">10f</span><span class="lb" style="left:1519px">20f</span><span class="lb" style="left:1580px">05:00f</span><span class="lb" style="left:1641px">10f</span><span class="lb" style="left:1702px">20f</span><span class="lb" style="left:1763px">06:00f</span><span class="lb" style="left:1824px">10f</span><span class="lb" style="left:1885px">20f</span>
<i class="tk" style="left:665px"></i><i class="tk" style="left:726px"></i><i class="tk" style="left:787px"></i><i class="tk" style="left:848px"></i><i class="tk" style="left:909px"></i><i class="tk" style="left:970px"></i><i class="tk" style="left:1031px"></i><i class="tk" style="left:1092px"></i><i class="tk" style="left:1153px"></i><i class="tk" style="left:1214px"></i><i class="tk" style="left:1275px"></i><i class="tk" style="left:1336px"></i><i class="tk" style="left:1397px"></i><i class="tk" style="left:1458px"></i><i class="tk" style="left:1519px"></i><i class="tk" style="left:1580px"></i><i class="tk" style="left:1641px"></i><i class="tk" style="left:1702px"></i><i class="tk" style="left:1763px"></i><i class="tk" style="left:1824px"></i>
<div style="position:absolute;left:659px;top:661px;width:1220px;height:1px;background:#0f0f0f"></div>
<div style="position:absolute;left:665px;top:662px;width:1214px;height:15px;background:#616161"></div>
<div style="position:absolute;left:659px;top:662px;width:6px;height:15px;background:#2d2d2d"></div>
<div style="position:absolute;left:660px;top:663px;width:5px;height:13px;background:#2d8ceb;border-radius:4px 0 0 4px"></div>
<div style="position:absolute;left:659px;top:677px;width:1220px;height:1px;background:#0f0f0f"></div>
<div style="position:absolute;left:659px;top:678px;width:1220px;height:4px;background:#2b2b2b"></div>
<div style="position:absolute;left:1746px;top:678px;width:6px;height:3px;background:#12b52e"></div>
<div style="position:absolute;left:659px;top:681px;width:1220px;height:1px;background:#111"></div>
<div style="position:absolute;left:659px;top:682px;width:1220px;height:38px;background:#2d2d2d"></div>
<div style="position:absolute;left:665px;top:683px;width:1214px;height:15px;background:#788886"></div>
<div style="position:absolute;left:665px;top:698px;width:1214px;height:4px;background:#3d4343"></div>
<div style="position:absolute;left:665px;top:702px;width:1214px;height:15px;background:#788886"></div>
<div style="position:absolute;left:665px;top:717px;width:1214px;height:3px;background:#3d4343"></div>
<svg style="left:665px;top:683px" width="6" height="6"><path d="M0 0h6L0 6z" fill="#444"/></svg>
<svg style="left:665px;top:702px" width="6" height="6"><path d="M0 0h6L0 6z" fill="#444"/></svg>
<div style="position:absolute;left:1745px;top:647px;width:1px;height:292px;background:#3a8fe6"></div>
<svg style="left:1740px;top:633px" width="11" height="28" viewBox="0 0 11 28"><rect x="4" y="0" width="3" height="9" fill="#4a86c0"/><path d="M0 14h11v6l-5.500 8L0 20z" fill="#2f8bee"/><path d="M4 20h3M5.500 20v5" stroke="#111"/></svg>
</body></html>
